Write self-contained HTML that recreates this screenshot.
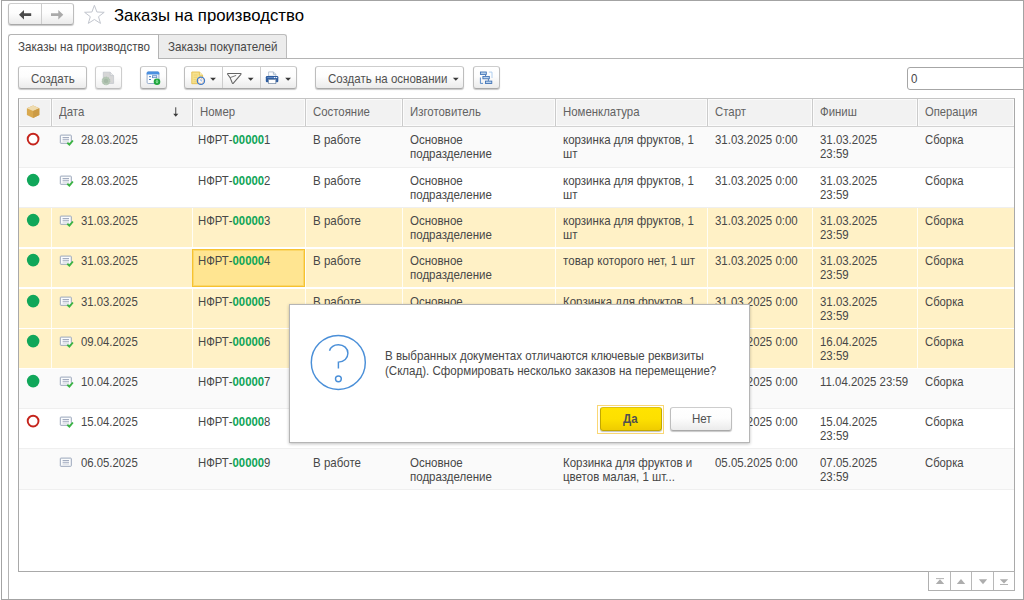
<!DOCTYPE html><html lang="ru"><head><meta charset="utf-8"><title>Заказы на производство</title><style>
*{box-sizing:border-box;margin:0;padding:0}
html,body{width:1024px;height:600px;overflow:hidden;background:#fff}
body{font-family:"Liberation Sans",sans-serif;font-size:12.6px;line-height:14px;color:#474747;position:relative}
div,svg{position:absolute}
.t{white-space:nowrap;transform-origin:0 0;transform:scaleX(0.914)}
.btn{border:1px solid #bdbdbd;border-top-color:#cdcdcd;border-bottom-color:#a9a9a9;border-radius:3px;background:linear-gradient(#ffffff 0%,#fdfdfd 45%,#ebebeb 100%);box-shadow:0 1px 1px rgba(0,0,0,.22)}
.g{color:#10a558;font-weight:bold}
.h{color:#626262}
.b{color:#505050}
</style></head><body>
<div class="btn" style="left:8px;top:3px;width:66px;height:22px;"></div>
<div style="left:41px;top:4px;width:1px;height:20px;background:#cdcdcd;"></div>
<div class="t" style="left:113.60px;top:6px;font-size:17px;line-height:20px;color:#000;transform:scaleX(0.985);">Заказы на производство</div>
<div style="left:158px;top:58px;width:866px;height:1px;background:#b4b4b4;"></div>
<div style="left:8px;top:34px;width:151px;height:566px;border:1px solid #b4b4b4;border-bottom:none;border-right:none;border-radius:3px 0 0 0;background:#fff;"></div>
<div style="left:158px;top:34px;width:1px;height:25px;background:#b4b4b4;"></div>
<div style="left:159px;top:34px;width:128px;height:24px;border:1px solid #bcbcbc;border-left:none;border-bottom:none;border-radius:0 3px 0 0;background:#ececec;"></div>
<div class="t" style="left:18.00px;top:40px;transform:scaleX(0.924);">Заказы на производство</div>
<div class="t" style="left:168.40px;top:40px;transform:scaleX(0.924);">Заказы покупателей</div>
<div style="left:1px;top:0px;width:1023px;height:600px;border:1px solid #a3a3a3;"></div>
<div class="btn" style="left:18px;top:66px;width:69px;height:23px;"></div>
<div class="t b" style="left:30.80px;top:72px;">Создать</div>
<div class="btn" style="left:95px;top:66px;width:27px;height:23px;opacity:.75;"></div>
<div class="btn" style="left:140px;top:66px;width:27px;height:23px;"></div>
<div class="btn" style="left:184px;top:66px;width:113px;height:23px;"></div>
<div style="left:222px;top:67px;width:1px;height:21px;background:#cdcdcd;"></div>
<div style="left:260px;top:67px;width:1px;height:21px;background:#cdcdcd;"></div>
<div class="btn" style="left:315px;top:66px;width:149px;height:23px;"></div>
<div class="t b" style="left:327.50px;top:72px;">Создать на основании</div>
<div class="btn" style="left:473px;top:66px;width:27px;height:23px;"></div>
<svg style="left:0;top:0" width="1024" height="600" viewBox="0 0 1024 600"><path d="M19 14.7 L24 10 L24 13.3 L31.2 13.3 L31.2 16.1 L24 16.1 L24 19.4 Z" fill="#4a4a4a"/><path d="M63.3 14.7 L58.3 10 L58.3 13.3 L51 13.3 L51 16.1 L58.3 16.1 L58.3 19.4 Z" fill="#aaaaaa"/><path d="M94.4 5.3 L96.9 12 L104.2 12.3 L98.5 16.7 L100.5 23.4 L94.4 19.5 L88.3 23.4 L90.3 16.7 L84.6 12.3 L91.9 12 Z" fill="#fff" stroke="#c2c6ce" stroke-width="1" stroke-linejoin="miter"/><path d="M210.15 77.7 L215.95 77.7 L213.05 80.7 Z" fill="#383838"/><path d="M247.80 77.7 L253.60 77.7 L250.70 80.7 Z" fill="#383838"/><path d="M285.20 77.7 L291.00 77.7 L288.10 80.7 Z" fill="#383838"/><path d="M452.90 77.7 L458.70 77.7 L455.80 80.7 Z" fill="#383838"/><path d="M103.3 72.2 H110.2 L113.6 75.6 V83.4 H103.3 Z" fill="#d6d6d6" stroke="#c3c6cd" stroke-width="0.8"/><path d="M110.2 72.2 V75.6 H113.6" fill="#e8e8e8" stroke="#c3c6cd" stroke-width="0.8"/><circle cx="106" cy="80.9" r="3.9" fill="#b4c6b4"/><circle cx="106" cy="80.9" r="2.2" fill="#a5b9a6"/><circle cx="106" cy="80.9" r="3.9" fill="none" stroke="#a9c0aa" stroke-width="0.9" stroke-dasharray="1.2 1"/><rect x="147.1" y="72" width="11.8" height="11.5" rx="1.2" fill="#fdfeff" stroke="#8aa4c6" stroke-width="0.9"/><path d="M146.7 74.6 V73 Q146.7 71.5 148.2 71.5 H157.8 Q159.3 71.5 159.3 73 V74.6 Z" fill="#4a8fe0"/><path d="M149 76.7 H151 M149 79.5 H151" stroke="#4a7ec2" stroke-width="1"/><rect x="152.4" y="75.7" width="4.4" height="2" fill="#dfe9f7" stroke="#5a86c4" stroke-width="0.8"/><circle cx="157" cy="81.7" r="3.3" fill="#1ea53c"/><path d="M155.2 81.5 L157 83.4 L158.8 81.5 Z M156.3 79.8 H157.7 V81.8 H156.3 Z" fill="#8fe0a0"/><path d="M191.8 72 H199.4 L202.6 75.2 V83.7 H191.8 Z" fill="#f7e28e" stroke="#e4c050" stroke-width="0.9"/><path d="M199.4 72 V75.2 H202.6" fill="#fdf3c4" stroke="#e4c050" stroke-width="0.8"/><path d="M193.6 75 H197.6 M193.6 77.3 H197.6 M193.6 79.6 H196 M193.6 81.8 H196" stroke="#ecd070" stroke-width="0.9"/><circle cx="200.9" cy="80.8" r="3.6" fill="#fafcff" stroke="#3f7bc9" stroke-width="1.3"/><circle cx="200.9" cy="80.8" r="2.5" fill="none" stroke="#f0a060" stroke-width="0.9" stroke-dasharray="0.9 1.06"/><path d="M200.9 79 V80.9 H202.2" fill="none" stroke="#7aa6dd" stroke-width="0.8"/><path d="M228 73.4 H240.4 Q241.4 73.4 240.9 74.3 L233.4 83.1 Q232.7 83.9 232.3 83 L230.1 77.6 L227.6 74.3 Q227.2 73.4 228 73.4 Z" fill="none" stroke="#646464" stroke-width="1.05" stroke-linejoin="round"/><path d="M230.1 77.6 L236.2 75.4" fill="none" stroke="#6a6a6a" stroke-width="0.9"/><path d="M268.6 76.2 V71.9 H273.4 L275.8 74.3 V76.2 Z" fill="#fdfeff" stroke="#a9b9cc" stroke-width="0.8"/><path d="M273.4 71.9 V74.3 H275.8" fill="#e4ebf3" stroke="#97a9bf" stroke-width="0.7"/><rect x="265.8" y="76" width="12.5" height="6.2" rx="1.2" fill="#2d5c9f"/><path d="M267.2 77.6 H276.8" stroke="#6f94c9" stroke-width="0.9"/><rect x="274" y="77.1" width="1.2" height="1" fill="#fff"/><rect x="276" y="77.1" width="1.2" height="1" fill="#fff"/><rect x="268.6" y="79.6" width="7.2" height="4" fill="#ffffff" stroke="#7f93ad" stroke-width="0.8"/><path d="M488.9 72.1 H492 V78" fill="none" stroke="#a9cbee" stroke-width="0.9"/><path d="M480.4 77.5 V83.4 H483" fill="none" stroke="#4a80c4" stroke-width="0.9"/><path d="M485.6 74.6 V76.2 M488.4 79 V80.9" fill="none" stroke="#3a6db2" stroke-width="0.9"/><rect x="480.4" y="72.0" width="5.9" height="2.4" fill="#b9d2ee" stroke="#3a6db2" stroke-width="0.85"/><rect x="482.9" y="76.4" width="6.4" height="2.4" fill="#b9d2ee" stroke="#3a6db2" stroke-width="0.85"/><rect x="485.5" y="81.1" width="6.3" height="2.4" fill="#b9d2ee" stroke="#3a6db2" stroke-width="0.85"/></svg>
<div style="left:907px;top:67px;width:130px;height:23px;border:1px solid #a6a6a6;border-radius:3px;background:#fff;"></div>
<div class="t" style="left:910.60px;top:72px;">0</div>
<div style="left:1023px;top:0px;width:1px;height:600px;background:#a3a3a3;"></div>
<div style="left:18px;top:98px;width:997px;height:474px;border:1px solid #a9a9a9;border-top-color:#c4c4c4;background:#fff;"></div>
<div style="left:19px;top:99px;width:995px;height:27px;background:#f2f2f2;border:1px solid #fbfbfb;"></div>
<div style="left:19px;top:126px;width:995px;height:1px;background:#d2d2d2;"></div>
<div style="left:50px;top:99px;width:3px;height:27px;background:#cbcbcb;border:solid #fbfbfb;border-width:0 1px;"></div>
<div style="left:191px;top:99px;width:3px;height:27px;background:#cbcbcb;border:solid #fbfbfb;border-width:0 1px;"></div>
<div style="left:304px;top:99px;width:3px;height:27px;background:#cbcbcb;border:solid #fbfbfb;border-width:0 1px;"></div>
<div style="left:401px;top:99px;width:3px;height:27px;background:#cbcbcb;border:solid #fbfbfb;border-width:0 1px;"></div>
<div style="left:554px;top:99px;width:3px;height:27px;background:#cbcbcb;border:solid #fbfbfb;border-width:0 1px;"></div>
<div style="left:706px;top:99px;width:3px;height:27px;background:#cbcbcb;border:solid #fbfbfb;border-width:0 1px;"></div>
<div style="left:811px;top:99px;width:3px;height:27px;background:#cbcbcb;border:solid #fbfbfb;border-width:0 1px;"></div>
<div style="left:916px;top:99px;width:3px;height:27px;background:#cbcbcb;border:solid #fbfbfb;border-width:0 1px;"></div>
<div class="t h" style="left:58.50px;top:105px;transform:scaleX(0.905);">Дата</div>
<div class="t h" style="left:199.50px;top:105px;transform:scaleX(0.905);">Номер</div>
<div class="t h" style="left:313.10px;top:105px;transform:scaleX(0.905);">Состояние</div>
<div class="t h" style="left:409.50px;top:105px;transform:scaleX(0.905);">Изготовитель</div>
<div class="t h" style="left:562.50px;top:105px;transform:scaleX(0.905);">Номенклатура</div>
<div class="t h" style="left:715.00px;top:105px;transform:scaleX(0.905);">Старт</div>
<div class="t h" style="left:820.00px;top:105px;transform:scaleX(0.905);">Финиш</div>
<div class="t h" style="left:924.50px;top:105px;transform:scaleX(0.89);">Операция</div>
<div style="left:19px;top:127px;width:995px;height:40px;background:#fafafa;"></div>
<div class="t" style="left:80.60px;top:133px;transform:scaleX(0.9);">28.03.2025</div>
<div class="t" style="left:198.00px;top:133px;transform:scaleX(0.9);">НФРТ-<span class="g">00000</span>1</div>
<div class="t" style="left:313.00px;top:133px;">В работе</div>
<div class="t" style="left:409.50px;top:133px;">Основное</div><div class="t" style="left:409.50px;top:147px;">подразделение</div>
<div class="t" style="left:562.50px;top:133px;">корзинка для фруктов, 1</div><div class="t" style="left:562.50px;top:147px;">шт</div>
<div class="t" style="left:714.80px;top:133px;transform:scaleX(0.908);">31.03.2025 0:00</div>
<div class="t" style="left:819.60px;top:133px;transform:scaleX(0.908);">31.03.2025</div><div class="t" style="left:819.60px;top:147px;transform:scaleX(0.908);">23:59</div>
<div class="t" style="left:924.60px;top:133px;transform:scaleX(0.895);">Сборка</div>
<div style="left:19px;top:168px;width:995px;height:39px;background:#ffffff;"></div>
<div class="t" style="left:80.60px;top:174px;transform:scaleX(0.9);">28.03.2025</div>
<div class="t" style="left:198.00px;top:174px;transform:scaleX(0.9);">НФРТ-<span class="g">00000</span>2</div>
<div class="t" style="left:313.00px;top:174px;">В работе</div>
<div class="t" style="left:409.50px;top:174px;">Основное</div><div class="t" style="left:409.50px;top:188px;">подразделение</div>
<div class="t" style="left:562.50px;top:174px;">корзинка для фруктов, 1</div><div class="t" style="left:562.50px;top:188px;">шт</div>
<div class="t" style="left:714.80px;top:174px;transform:scaleX(0.908);">31.03.2025 0:00</div>
<div class="t" style="left:819.60px;top:174px;transform:scaleX(0.908);">31.03.2025</div><div class="t" style="left:819.60px;top:188px;transform:scaleX(0.908);">23:59</div>
<div class="t" style="left:924.60px;top:174px;transform:scaleX(0.895);">Сборка</div>
<div style="left:19px;top:208px;width:995px;height:39px;background:#fff1c6;"></div>
<div style="left:51px;top:208px;width:1px;height:39px;background:#fffdf4;"></div>
<div style="left:192px;top:208px;width:1px;height:39px;background:#fffdf4;"></div>
<div style="left:305px;top:208px;width:1px;height:39px;background:#fffdf4;"></div>
<div style="left:402px;top:208px;width:1px;height:39px;background:#fffdf4;"></div>
<div style="left:555px;top:208px;width:1px;height:39px;background:#fffdf4;"></div>
<div style="left:707px;top:208px;width:1px;height:39px;background:#fffdf4;"></div>
<div style="left:812px;top:208px;width:1px;height:39px;background:#fffdf4;"></div>
<div style="left:917px;top:208px;width:1px;height:39px;background:#fffdf4;"></div>
<div class="t" style="left:80.60px;top:214px;transform:scaleX(0.9);">31.03.2025</div>
<div class="t" style="left:198.00px;top:214px;transform:scaleX(0.9);">НФРТ-<span class="g">00000</span>3</div>
<div class="t" style="left:313.00px;top:214px;">В работе</div>
<div class="t" style="left:409.50px;top:214px;">Основное</div><div class="t" style="left:409.50px;top:228px;">подразделение</div>
<div class="t" style="left:562.50px;top:214px;">корзинка для фруктов, 1</div><div class="t" style="left:562.50px;top:228px;">шт</div>
<div class="t" style="left:714.80px;top:214px;transform:scaleX(0.908);">31.03.2025 0:00</div>
<div class="t" style="left:819.60px;top:214px;transform:scaleX(0.908);">31.03.2025</div><div class="t" style="left:819.60px;top:228px;transform:scaleX(0.908);">23:59</div>
<div class="t" style="left:924.60px;top:214px;transform:scaleX(0.895);">Сборка</div>
<div style="left:19px;top:249px;width:995px;height:38px;background:#fff1c6;"></div>
<div style="left:51px;top:249px;width:1px;height:38px;background:#fffdf4;"></div>
<div style="left:192px;top:249px;width:1px;height:38px;background:#fffdf4;"></div>
<div style="left:305px;top:249px;width:1px;height:38px;background:#fffdf4;"></div>
<div style="left:402px;top:249px;width:1px;height:38px;background:#fffdf4;"></div>
<div style="left:555px;top:249px;width:1px;height:38px;background:#fffdf4;"></div>
<div style="left:707px;top:249px;width:1px;height:38px;background:#fffdf4;"></div>
<div style="left:812px;top:249px;width:1px;height:38px;background:#fffdf4;"></div>
<div style="left:917px;top:249px;width:1px;height:38px;background:#fffdf4;"></div>
<div class="t" style="left:80.60px;top:254px;transform:scaleX(0.9);">31.03.2025</div>
<div class="t" style="left:313.00px;top:254px;">В работе</div>
<div class="t" style="left:409.50px;top:254px;">Основное</div><div class="t" style="left:409.50px;top:268px;">подразделение</div>
<div class="t" style="left:562.50px;top:254px;"><span style="letter-spacing:.12px">товар которого нет, 1 шт</span></div>
<div class="t" style="left:714.80px;top:254px;transform:scaleX(0.908);">31.03.2025 0:00</div>
<div class="t" style="left:819.60px;top:254px;transform:scaleX(0.908);">31.03.2025</div><div class="t" style="left:819.60px;top:268px;transform:scaleX(0.908);">23:59</div>
<div class="t" style="left:924.60px;top:254px;transform:scaleX(0.895);">Сборка</div>
<div style="left:19px;top:289px;width:995px;height:39px;background:#fff1c6;"></div>
<div style="left:51px;top:289px;width:1px;height:39px;background:#fffdf4;"></div>
<div style="left:192px;top:289px;width:1px;height:39px;background:#fffdf4;"></div>
<div style="left:305px;top:289px;width:1px;height:39px;background:#fffdf4;"></div>
<div style="left:402px;top:289px;width:1px;height:39px;background:#fffdf4;"></div>
<div style="left:555px;top:289px;width:1px;height:39px;background:#fffdf4;"></div>
<div style="left:707px;top:289px;width:1px;height:39px;background:#fffdf4;"></div>
<div style="left:812px;top:289px;width:1px;height:39px;background:#fffdf4;"></div>
<div style="left:917px;top:289px;width:1px;height:39px;background:#fffdf4;"></div>
<div class="t" style="left:80.60px;top:295px;transform:scaleX(0.9);">31.03.2025</div>
<div class="t" style="left:198.00px;top:295px;transform:scaleX(0.9);">НФРТ-<span class="g">00000</span>5</div>
<div class="t" style="left:313.00px;top:295px;">В работе</div>
<div class="t" style="left:409.50px;top:295px;">Основное</div><div class="t" style="left:409.50px;top:309px;">подразделение</div>
<div class="t" style="left:562.50px;top:295px;">Корзинка для фруктов, 1</div><div class="t" style="left:562.50px;top:309px;">шт</div>
<div class="t" style="left:714.80px;top:295px;transform:scaleX(0.908);">31.03.2025 0:00</div>
<div class="t" style="left:819.60px;top:295px;transform:scaleX(0.908);">31.03.2025</div><div class="t" style="left:819.60px;top:309px;transform:scaleX(0.908);">23:59</div>
<div class="t" style="left:924.60px;top:295px;transform:scaleX(0.895);">Сборка</div>
<div style="left:19px;top:329px;width:995px;height:39px;background:#fff1c6;"></div>
<div style="left:51px;top:329px;width:1px;height:39px;background:#fffdf4;"></div>
<div style="left:192px;top:329px;width:1px;height:39px;background:#fffdf4;"></div>
<div style="left:305px;top:329px;width:1px;height:39px;background:#fffdf4;"></div>
<div style="left:402px;top:329px;width:1px;height:39px;background:#fffdf4;"></div>
<div style="left:555px;top:329px;width:1px;height:39px;background:#fffdf4;"></div>
<div style="left:707px;top:329px;width:1px;height:39px;background:#fffdf4;"></div>
<div style="left:812px;top:329px;width:1px;height:39px;background:#fffdf4;"></div>
<div style="left:917px;top:329px;width:1px;height:39px;background:#fffdf4;"></div>
<div class="t" style="left:80.60px;top:335px;transform:scaleX(0.9);">09.04.2025</div>
<div class="t" style="left:198.00px;top:335px;transform:scaleX(0.9);">НФРТ-<span class="g">00000</span>6</div>
<div class="t" style="left:313.00px;top:335px;">В работе</div>
<div class="t" style="left:409.50px;top:335px;">Основное</div><div class="t" style="left:409.50px;top:349px;">подразделение</div>
<div class="t" style="left:562.50px;top:335px;">Корзинка для фруктов, 1</div><div class="t" style="left:562.50px;top:349px;">шт</div>
<div class="t" style="left:714.80px;top:335px;transform:scaleX(0.908);">09.04.2025 0:00</div>
<div class="t" style="left:819.60px;top:335px;transform:scaleX(0.908);">16.04.2025</div><div class="t" style="left:819.60px;top:349px;transform:scaleX(0.908);">23:59</div>
<div class="t" style="left:924.60px;top:335px;transform:scaleX(0.895);">Сборка</div>
<div style="left:19px;top:369px;width:995px;height:39px;background:#fafafa;"></div>
<div class="t" style="left:80.60px;top:375px;transform:scaleX(0.9);">10.04.2025</div>
<div class="t" style="left:198.00px;top:375px;transform:scaleX(0.9);">НФРТ-<span class="g">00000</span>7</div>
<div class="t" style="left:313.00px;top:375px;">В работе</div>
<div class="t" style="left:409.50px;top:375px;">Основное</div><div class="t" style="left:409.50px;top:389px;">подразделение</div>
<div class="t" style="left:562.50px;top:375px;">Корзинка для фруктов, 1</div><div class="t" style="left:562.50px;top:389px;">шт</div>
<div class="t" style="left:714.80px;top:375px;transform:scaleX(0.908);">10.04.2025 0:00</div>
<div class="t" style="left:819.60px;top:375px;transform:scaleX(0.908);">11.04.2025 23:59</div>
<div class="t" style="left:924.60px;top:375px;transform:scaleX(0.895);">Сборка</div>
<div style="left:19px;top:409px;width:995px;height:39px;background:#ffffff;"></div>
<div class="t" style="left:80.60px;top:415px;transform:scaleX(0.9);">15.04.2025</div>
<div class="t" style="left:198.00px;top:415px;transform:scaleX(0.9);">НФРТ-<span class="g">00000</span>8</div>
<div class="t" style="left:313.00px;top:415px;">В работе</div>
<div class="t" style="left:409.50px;top:415px;">Основное</div><div class="t" style="left:409.50px;top:429px;">подразделение</div>
<div class="t" style="left:562.50px;top:415px;">Корзинка для фруктов, 1</div><div class="t" style="left:562.50px;top:429px;">шт</div>
<div class="t" style="left:714.80px;top:415px;transform:scaleX(0.908);">15.04.2025 0:00</div>
<div class="t" style="left:819.60px;top:415px;transform:scaleX(0.908);">15.04.2025</div><div class="t" style="left:819.60px;top:429px;transform:scaleX(0.908);">23:59</div>
<div class="t" style="left:924.60px;top:415px;transform:scaleX(0.895);">Сборка</div>
<div style="left:19px;top:449px;width:995px;height:40px;background:#fafafa;"></div>
<div class="t" style="left:80.60px;top:456px;transform:scaleX(0.9);">06.05.2025</div>
<div class="t" style="left:198.00px;top:456px;transform:scaleX(0.9);">НФРТ-<span class="g">00000</span>9</div>
<div class="t" style="left:313.00px;top:456px;">В работе</div>
<div class="t" style="left:409.50px;top:456px;">Основное</div><div class="t" style="left:409.50px;top:470px;">подразделение</div>
<div class="t" style="left:562.50px;top:456px;">Корзинка для фруктов и</div><div class="t" style="left:562.50px;top:470px;">цветов малая, 1 шт...</div>
<div class="t" style="left:714.80px;top:456px;transform:scaleX(0.908);">05.05.2025 0:00</div>
<div class="t" style="left:819.60px;top:456px;transform:scaleX(0.908);">07.05.2025</div><div class="t" style="left:819.60px;top:470px;transform:scaleX(0.908);">23:59</div>
<div class="t" style="left:924.60px;top:456px;transform:scaleX(0.895);">Сборка</div>
<div style="left:19px;top:167px;width:995px;height:1px;background:#efefef;"></div>
<div style="left:19px;top:207px;width:995px;height:1px;background:#efefef;"></div>
<div style="left:19px;top:408px;width:995px;height:1px;background:#efefef;"></div>
<div style="left:19px;top:448px;width:995px;height:1px;background:#efefef;"></div>
<div style="left:19px;top:489px;width:995px;height:1px;background:#efefef;"></div>
<div style="left:192px;top:249px;width:113px;height:38px;background:#ffe591;border:1px solid #f6c230;box-shadow:inset 0 0 0 1px rgba(246,194,48,.4);"></div>
<div class="t" style="left:198.00px;top:254px;transform:scaleX(0.9);">НФРТ-<span class="g">00000</span>4</div>
<svg style="left:0;top:0" width="1024" height="600" viewBox="0 0 1024 600"><path d="M175.75 107.3 V114.6" fill="none" stroke="#444" stroke-width="1"/><path d="M173.2 113.8 L178.3 113.8 L175.75 116.7 Z" fill="#3a3a3a"/><path d="M33.1 105.6 L39.3 108.2 L39.3 115 L33.1 118 L26.9 115 L26.9 108.2 Z" fill="#d9a94f"/><path d="M33.1 105.6 L39.3 108.2 L33.1 111 L26.9 108.2 Z" fill="#efdcb0"/><path d="M33.1 111 L39.3 108.2 L39.3 115 L33.1 118 Z" fill="#cc9b45"/><circle cx="33.1" cy="139.10" r="5.4" fill="#fff" stroke="#c5241c" stroke-width="1.9"/><rect x="60.30" y="135.10" width="11" height="8.2" rx="0.6" fill="#fbfcfd" stroke="#9aa6bb" stroke-width="1"/><path d="M62.60 137.50 h6.4 M62.60 139.30 h6.4" stroke="#98a3b8" stroke-width="0.9"/><path d="M62.60 141.00 h6.4" stroke="#c3c9d4" stroke-width="0.9"/><path d="M67.30 142.70 l2.1 1.9 l3.5 -4.1" fill="none" stroke="#3bb443" stroke-width="1.9"/><circle cx="33.15" cy="180.10" r="6.3" fill="#10a75a"/><rect x="60.30" y="176.10" width="11" height="8.2" rx="0.6" fill="#fbfcfd" stroke="#9aa6bb" stroke-width="1"/><path d="M62.60 178.50 h6.4 M62.60 180.30 h6.4" stroke="#98a3b8" stroke-width="0.9"/><path d="M62.60 182.00 h6.4" stroke="#c3c9d4" stroke-width="0.9"/><path d="M67.30 183.70 l2.1 1.9 l3.5 -4.1" fill="none" stroke="#3bb443" stroke-width="1.9"/><circle cx="33.15" cy="220.10" r="6.3" fill="#10a75a"/><rect x="60.30" y="216.10" width="11" height="8.2" rx="0.6" fill="#fbfcfd" stroke="#9aa6bb" stroke-width="1"/><path d="M62.60 218.50 h6.4 M62.60 220.30 h6.4" stroke="#98a3b8" stroke-width="0.9"/><path d="M62.60 222.00 h6.4" stroke="#c3c9d4" stroke-width="0.9"/><path d="M67.30 223.70 l2.1 1.9 l3.5 -4.1" fill="none" stroke="#3bb443" stroke-width="1.9"/><circle cx="33.15" cy="260.10" r="6.3" fill="#10a75a"/><rect x="60.30" y="256.10" width="11" height="8.2" rx="0.6" fill="#fbfcfd" stroke="#9aa6bb" stroke-width="1"/><path d="M62.60 258.50 h6.4 M62.60 260.30 h6.4" stroke="#98a3b8" stroke-width="0.9"/><path d="M62.60 262.00 h6.4" stroke="#c3c9d4" stroke-width="0.9"/><path d="M67.30 263.70 l2.1 1.9 l3.5 -4.1" fill="none" stroke="#3bb443" stroke-width="1.9"/><circle cx="33.15" cy="301.10" r="6.3" fill="#10a75a"/><rect x="60.30" y="297.10" width="11" height="8.2" rx="0.6" fill="#fbfcfd" stroke="#9aa6bb" stroke-width="1"/><path d="M62.60 299.50 h6.4 M62.60 301.30 h6.4" stroke="#98a3b8" stroke-width="0.9"/><path d="M62.60 303.00 h6.4" stroke="#c3c9d4" stroke-width="0.9"/><path d="M67.30 304.70 l2.1 1.9 l3.5 -4.1" fill="none" stroke="#3bb443" stroke-width="1.9"/><circle cx="33.15" cy="341.10" r="6.3" fill="#10a75a"/><rect x="60.30" y="337.10" width="11" height="8.2" rx="0.6" fill="#fbfcfd" stroke="#9aa6bb" stroke-width="1"/><path d="M62.60 339.50 h6.4 M62.60 341.30 h6.4" stroke="#98a3b8" stroke-width="0.9"/><path d="M62.60 343.00 h6.4" stroke="#c3c9d4" stroke-width="0.9"/><path d="M67.30 344.70 l2.1 1.9 l3.5 -4.1" fill="none" stroke="#3bb443" stroke-width="1.9"/><circle cx="33.15" cy="381.10" r="6.3" fill="#10a75a"/><rect x="60.30" y="377.10" width="11" height="8.2" rx="0.6" fill="#fbfcfd" stroke="#9aa6bb" stroke-width="1"/><path d="M62.60 379.50 h6.4 M62.60 381.30 h6.4" stroke="#98a3b8" stroke-width="0.9"/><path d="M62.60 383.00 h6.4" stroke="#c3c9d4" stroke-width="0.9"/><path d="M67.30 384.70 l2.1 1.9 l3.5 -4.1" fill="none" stroke="#3bb443" stroke-width="1.9"/><circle cx="33.1" cy="421.10" r="5.4" fill="#fff" stroke="#c5241c" stroke-width="1.9"/><rect x="60.30" y="417.10" width="11" height="8.2" rx="0.6" fill="#fbfcfd" stroke="#9aa6bb" stroke-width="1"/><path d="M62.60 419.50 h6.4 M62.60 421.30 h6.4" stroke="#98a3b8" stroke-width="0.9"/><path d="M62.60 423.00 h6.4" stroke="#c3c9d4" stroke-width="0.9"/><path d="M67.30 424.70 l2.1 1.9 l3.5 -4.1" fill="none" stroke="#3bb443" stroke-width="1.9"/><rect x="60.30" y="458.10" width="11" height="8.2" rx="0.6" fill="#fbfcfd" stroke="#9aa6bb" stroke-width="1"/><path d="M62.60 460.50 h6.4 M62.60 462.30 h6.4" stroke="#98a3b8" stroke-width="0.9"/><path d="M62.60 464.00 h6.4" stroke="#c3c9d4" stroke-width="0.9"/></svg>
<div style="left:928px;top:571px;width:87px;height:20px;border:1px solid #b0b0b0;background:#fff;"></div>
<div style="left:950px;top:572px;width:1px;height:18px;background:#b8b8b8;"></div>
<div style="left:971px;top:572px;width:1px;height:18px;background:#b8b8b8;"></div>
<div style="left:993px;top:572px;width:1px;height:18px;background:#b8b8b8;"></div>
<svg style="left:934.5px;top:577px" width="10" height="8" viewBox="0 0 10 8"><path d="M0.8 7 L5 2.2 L9.2 7 Z" fill="#adadad"/><rect x="1" y="1.1" width="8" height="1" fill="#b4b4b4"/></svg>
<svg style="left:956px;top:577px" width="10" height="8" viewBox="0 0 10 8"><path d="M0.8 7 L5 2 L9.2 7 Z" fill="#adadad"/></svg>
<svg style="left:977.5px;top:578px" width="10" height="8" viewBox="0 0 10 8"><path d="M0.8 1.3 L5 6.3 L9.2 1.3 Z" fill="#adadad"/></svg>
<svg style="left:999px;top:578px" width="10" height="8" viewBox="0 0 10 8"><path d="M0.8 1.2 L5 5.6 L9.2 1.2 Z" fill="#adadad"/><rect x="1" y="6" width="8" height="1" fill="#b4b4b4"/></svg>
<div style="left:289px;top:304px;width:461px;height:139px;background:#fff;border:1px solid #b5b5b5;box-shadow:0 1px 3px rgba(0,0,0,.25);"></div>
<svg style="left:0;top:0" width="1024" height="600" viewBox="0 0 1024 600"><g fill="none" stroke="#4a8fd8" stroke-width="1.45"><circle cx="338.3" cy="362.45" r="27.0"/><path d="M329.5 350.7 C330.7 347 334 344.7 338.4 344.7 C343.8 344.7 347.9 348.3 347.9 353.3 C347.9 358.3 344 361.7 338.4 362.1 L338.4 368.6"/><circle cx="338.4" cy="378.8" r="2.9"/></g></svg>
<div class="t" style="left:384.90px;top:349px;transform:scaleX(0.918);">В выбранных документах отличаются ключевые реквизиты</div>
<div class="t" style="left:384.90px;top:364px;transform:scaleX(0.917);">(Склад). Сформировать несколько заказов на перемещение?</div>
<div style="left:597px;top:405px;width:67px;height:29px;border:1px solid #fad774;"></div>
<div style="left:600px;top:407px;width:62px;height:24px;border:1px solid #c2a800;border-top-color:#d9bf1a;border-radius:3px;background:linear-gradient(#ffe300 0%,#fde000 50%,#efcc00 100%);box-shadow:0 1px 1px rgba(0,0,0,.25);"></div>
<div class="t b" style="left:623.00px;top:412px;"><b>Да</b></div>
<div class="btn" style="left:670px;top:407px;width:62px;height:24px;"></div>
<div class="t b" style="left:691.50px;top:412px;">Нет</div>
</body></html>
